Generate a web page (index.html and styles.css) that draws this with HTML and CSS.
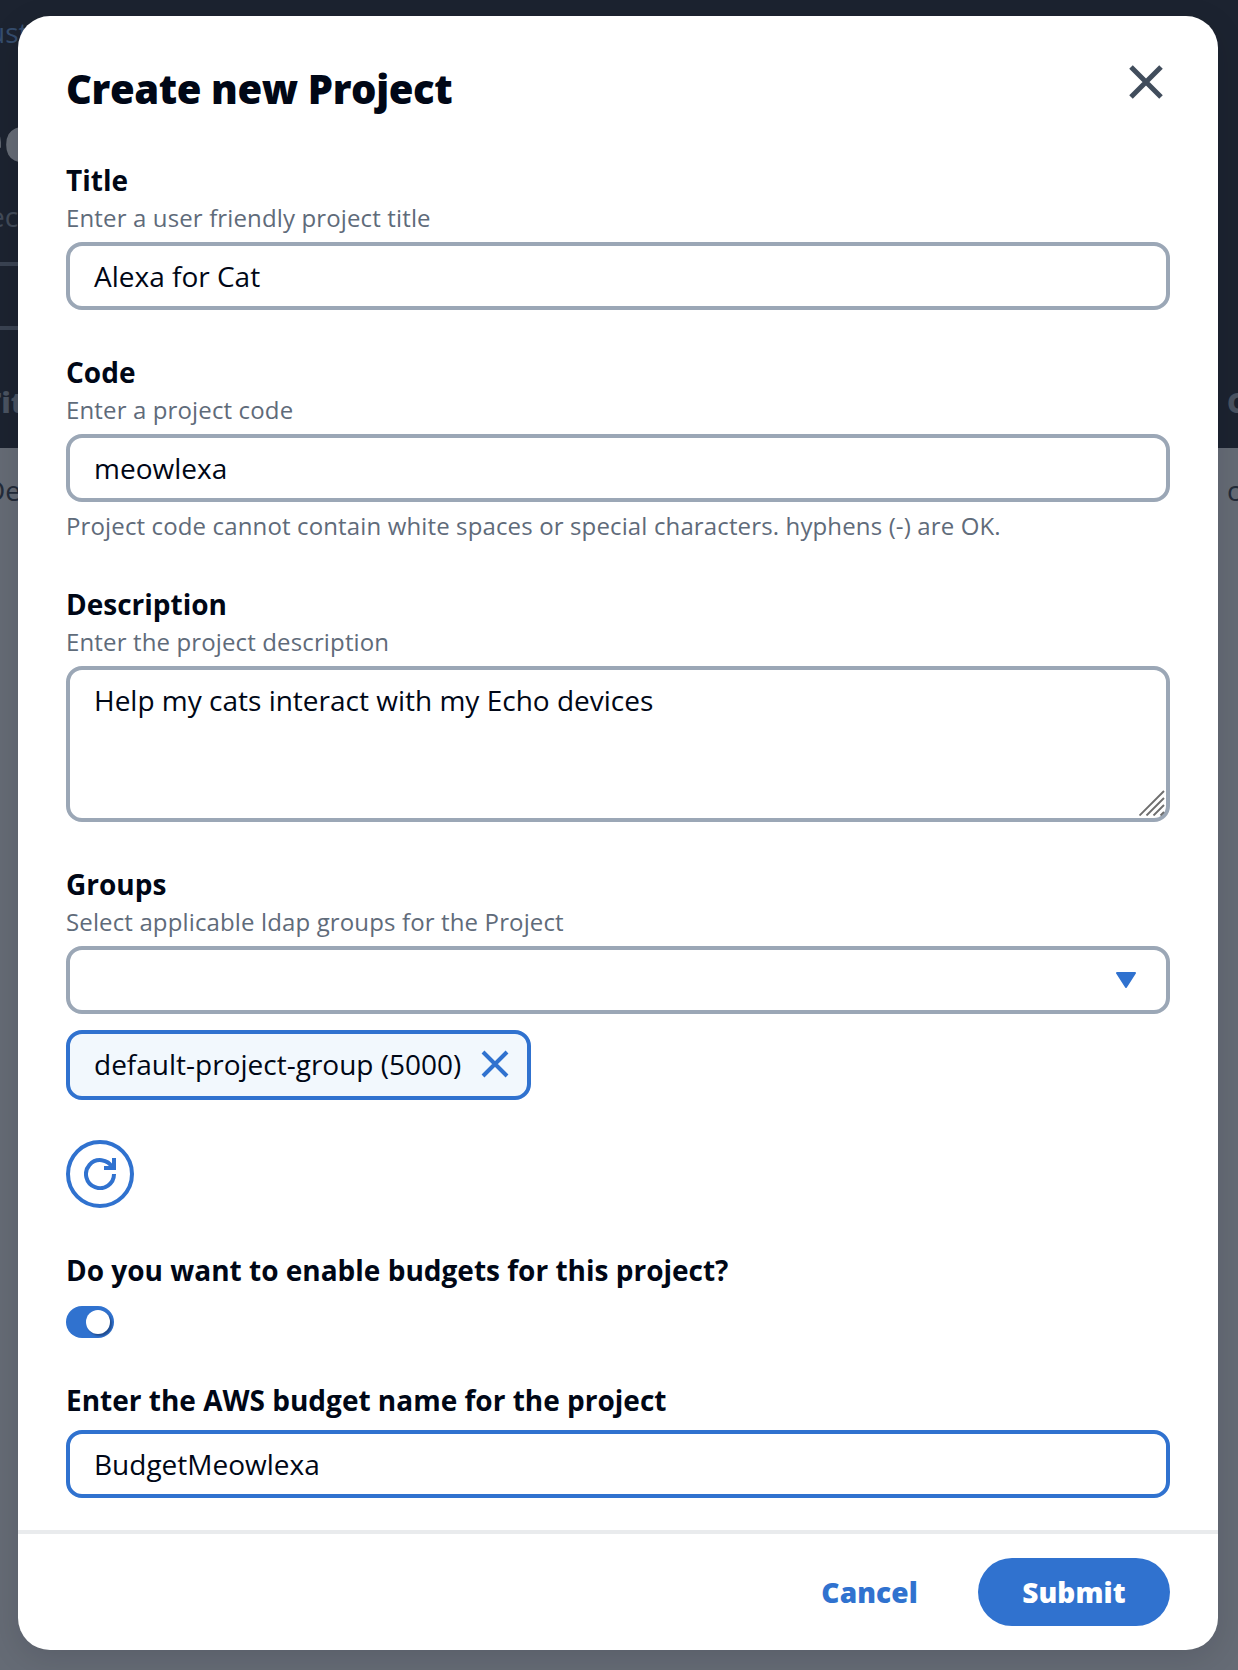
FILE: index.html
```html
<!DOCTYPE html>
<html lang="en">
<head>
<meta charset="utf-8">
<title>Create new Project</title>
<link rel="stylesheet" href="styles.css">
</head>
<body>
<div class="page" aria-hidden="true">
  <div class="page-top">
    <div class="crumb">ust</div>
    <div class="page-title">ec</div>
    <div class="page-sub">ec</div>
    <div class="filter"></div>
    <div class="row row-head"><span>Tit</span><span class="col-end">C</span></div>
  </div>
  <div class="row row-data"><span>De</span><span class="col-end">c</span></div>
</div>

<main class="modal" role="dialog" aria-labelledby="dialog-title">
  <header class="modal-header">
    <h2 id="dialog-title">Create new Project</h2>
    <button class="close" aria-label="Close">
      <svg width="40" height="40" viewBox="0 0 16 16" fill="none" stroke="currentColor" stroke-width="2"><path d="m2 2 12 12M14 2 2 14"/></svg>
    </button>
  </header>

  <form class="fields">
    <section class="field">
      <div class="label">Title</div>
      <div class="hint">Enter a user friendly project title</div>
      <div class="control">Alexa for Cat</div>
    </section>

    <section class="field">
      <div class="label">Code</div>
      <div class="hint">Enter a project code</div>
      <div class="control">meowlexa</div>
      <div class="hint constraint">Project code cannot contain white spaces or special characters. hyphens (-) are OK.</div>
    </section>

    <section class="field">
      <div class="label">Description</div>
      <div class="hint">Enter the project description</div>
      <div class="control area">
        <span>Help my cats interact with my Echo devices</span>
        <svg class="grip" width="26" height="26" viewBox="0 0 26 26" fill="none" stroke="#6e6e6e" stroke-width="1.9"><path d="M.5 25.500 25 1M7.500 25.500 25 8M14.500 25.500 25 15M21.500 25.500 25 22"/></svg>
      </div>
    </section>

    <section class="field">
      <div class="label">Groups</div>
      <div class="hint">Select applicable ldap groups for the Project</div>
      <div class="control select">
        <svg width="20" height="16" viewBox="0 0 20 16" fill="#3072cf" stroke="#3072cf" stroke-width="2" stroke-linejoin="round"><path d="M1 1h18l-9 14z"/></svg>
      </div>
      <div class="token">
        <span>default-project-group (5000)</span>
        <svg width="32" height="32" viewBox="0 0 16 16" fill="none" stroke="#3072cf" stroke-width="2"><path d="m2 2 12 12M14 2 2 14"/></svg>
      </div>
    </section>

    <button type="button" class="refresh" aria-label="Refresh">
      <svg width="32" height="32" viewBox="0 0 16 16" fill="none" stroke="currentColor" stroke-width="2"><path d="M10 5h5V0"/><path d="M15 8a7 7 0 1 1-.8-3.200"/></svg>
    </button>

    <section class="field">
      <div class="label">Do you want to enable budgets for this project?</div>
      <div class="toggle"><span class="knob"></span></div>
    </section>

    <section class="field">
      <div class="label">Enter the AWS budget name for the project</div>
      <div class="control focused">BudgetMeowlexa</div>
    </section>
  </form>

  <footer class="modal-footer">
    <button class="btn">Cancel</button>
    <button class="btn primary">Submit</button>
  </footer>
</main>
</body>
</html>
```
FILE: styles.css
```css
* { box-sizing: border-box; }

body {
  margin: 0;
  height: 1670px;
  padding: 16px 20px 20px 18px;
  position: relative;
  overflow: hidden;
  font: 400 28px/44px "Open Sans", sans-serif;
  color: #000716;
}

button {
  font: inherit;
  border: 0;
  padding: 0;
  background: none;
}

svg { display: block; }

/* Dimmed page behind the dialog */
.page {
  position: absolute;
  inset: 0;
  background: #656b75;
  overflow: hidden;
  white-space: nowrap;
}

.page-top {
  height: 448px;
  padding-top: 10px;
  background: #1c2330;
  color: #656b75;
}

.crumb {
  color: #354d6e;
  text-indent: -12px;
}

.page-title {
  margin-top: 40px;
  font-size: 64px;
  line-height: 88px;
  font-weight: 800;
  text-indent: -36px;
}

.page-sub {
  margin-top: 12px;
  color: #424b59;
  text-indent: -11px;
}

.filter {
  width: 600px;
  height: 68px;
  margin-top: 24px;
  border: solid #3a4352;
  border-width: 4px 0;
}

.row {
  display: flex;
  justify-content: space-between;
}

.row-head {
  margin-top: 50px;
  font-weight: 800;
  color: #4a5361;
  text-indent: -15px;
}

.row-data {
  padding-top: 20px;
  color: #232b39;
  text-indent: -15px;
}

.col-end {
  width: 11px;
  text-indent: 0;
}

/* Dialog */
.modal {
  position: relative;
  display: flex;
  flex-direction: column;
  height: 1634px;
  border-radius: 32px;
  background: #fff;
  box-shadow: 0 8px 32px rgba(0, 7, 22, 0.12);
}

.modal-header {
  display: flex;
  justify-content: space-between;
  align-items: flex-start;
  height: 142px;
  padding: 46px 52px 0 48px;
}

h2 {
  margin: 3px 0 0;
  font-size: 40px;
  line-height: 48px;
  font-weight: 800;
  letter-spacing: -0.4px;
}

.close { color: #414d5c; }

.fields {
  display: flex;
  flex-direction: column;
  gap: 40px;
  flex: 1;
  padding: 0 48px;
}

.label { font-weight: 700; }

.hint {
  font-size: 24px;
  line-height: 32px;
  letter-spacing: 0.135px;
  color: #5f6b7a;
}

.constraint { margin-top: 8px; }

.control {
  display: flex;
  align-items: center;
  height: 68px;
  margin-top: 8px;
  padding: 0 24px;
  border: 4px solid #9ba7b6;
  border-radius: 16px;
}

.area {
  position: relative;
  align-items: flex-start;
  height: 156px;
  padding-top: 8px;
}

.grip {
  position: absolute;
  right: 1px;
  bottom: 2px;
}

.select {
  justify-content: flex-end;
  padding-right: 30px;
}

.focused { border-color: #3072cf; }

.token {
  display: flex;
  justify-content: space-between;
  align-items: center;
  width: 465px;
  height: 70px;
  margin-top: 16px;
  padding: 0 16px 2px 24px;
  border: 4px solid #3072cf;
  border-radius: 16px;
  background: #f2f8fd;
}

.refresh {
  display: flex;
  align-items: center;
  justify-content: center;
  width: 68px;
  height: 68px;
  border: 4px solid #3072cf;
  border-radius: 50%;
  color: #3072cf;
}

.toggle {
  display: flex;
  justify-content: flex-end;
  width: 48px;
  height: 32px;
  margin-top: 14px;
  padding: 4px;
  border-radius: 16px;
  background: #3072cf;
}

.knob {
  width: 24px;
  height: 24px;
  border-radius: 50%;
  background: #fff;
  box-shadow: 2px 2px 2px rgba(0, 7, 22, 0.35);
}

.modal-footer {
  display: flex;
  justify-content: flex-end;
  gap: 16px;
  height: 120px;
  padding: 24px 48px;
  border-top: 4px solid #e9ebed;
}

.btn {
  height: 68px;
  padding: 0 44px;
  border-radius: 34px;
  font-weight: 800;
  letter-spacing: 0.14px;
  color: #3072cf;
}

.primary {
  width: 192px;
  padding: 0;
  background: #3072cf;
  color: #fff;
}
```
